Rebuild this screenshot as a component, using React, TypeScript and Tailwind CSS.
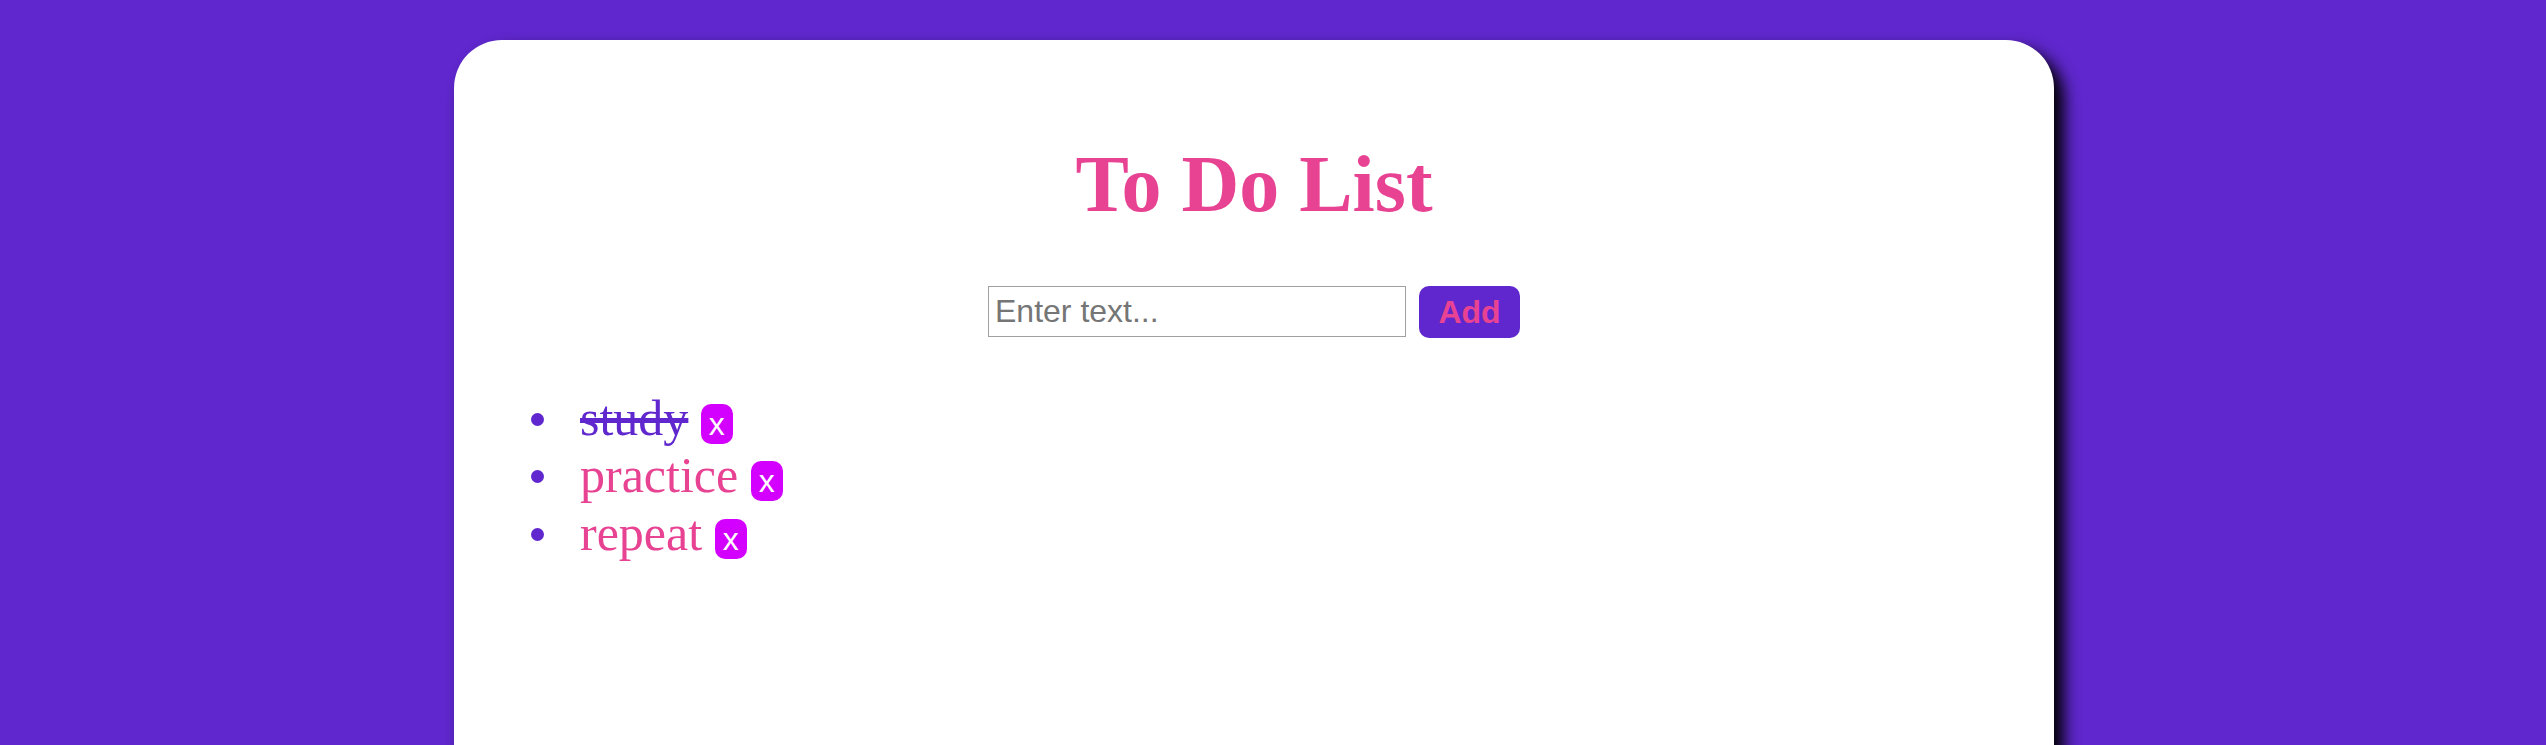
import { useState } from "react";

interface Task {
  text: string;
  done: boolean;
}

const initialTasks: Task[] = [
  { text: "study", done: true },
  { text: "practice", done: false },
  { text: "repeat", done: false },
];

const App = () => {
  const [tasks, setTasks] = useState<Task[]>(initialTasks);
  const [text, setText] = useState("");

  const addTask = () => {
    if (!text.trim()) return;
    setTasks([...tasks, { text: text.trim(), done: false }]);
    setText("");
  };

  const toggle = (i: number) =>
    setTasks(tasks.map((t, j) => (j === i ? { ...t, done: !t.done } : t)));

  const remove = (i: number) => setTasks(tasks.filter((_, j) => j !== i));

  return (
    <div className="h-[745px] w-full overflow-hidden bg-[#5f27cd] pt-[40px]">
      <div className="ml-[454px] h-[800px] w-[1600px] rounded-[48px] bg-white pt-[99px] shadow-[10px_10px_16px_#000]">
        <h1 className="text-center font-['Liberation_Serif',serif] text-[80px] font-bold leading-[1.149] text-[#e84393]">
          To Do List
        </h1>

        <div className="mt-[55px] flex items-center justify-center gap-[13px]">
          <input
            type="text"
            value={text}
            onChange={(e) => setText(e.target.value)}
            placeholder="Enter text..."
            className="h-[51px] w-[418px] border border-[#a0a0a0] px-[6px] font-['Liberation_Sans',Arial,sans-serif] text-[32px] text-black outline-none placeholder:text-[#757575]"
          />
          <button
            onClick={addTask}
            className="h-[52px] w-[101px] rounded-[10px] bg-[#5f27cd] font-['Liberation_Sans',Arial,sans-serif] text-[32px] font-bold text-[#e84393]"
          >
            Add
          </button>
        </div>

        {/* bullets drawn by hand: the reference's disc is larger and set further out */}
        <ul className="mt-[52px] pl-[126px] font-['Liberation_Serif',serif] text-[50px] leading-[1.149]">
          {tasks.map((task, i) => (
            <li key={i} className="relative">
              <span className="absolute left-[-49px] top-[23px] h-[13px] w-[13px] rounded-full bg-[#5f27cd]" />
              <span
                onClick={() => toggle(i)}
                className={
                  task.done
                    ? "cursor-pointer text-[#5f27cd] line-through"
                    : "cursor-pointer text-[#e84393]"
                }
              >
                {task.text}
              </span>{" "}
              <button
                onClick={() => remove(i)}
                className="inline-block rounded-[10px] bg-[#d400ff] px-[8px] py-[3px] align-baseline font-['Liberation_Sans',Arial,sans-serif] text-[32px] leading-[34px] text-white"
              >
                x
              </button>
            </li>
          ))}
        </ul>
      </div>
    </div>
  );
};

export default App;
